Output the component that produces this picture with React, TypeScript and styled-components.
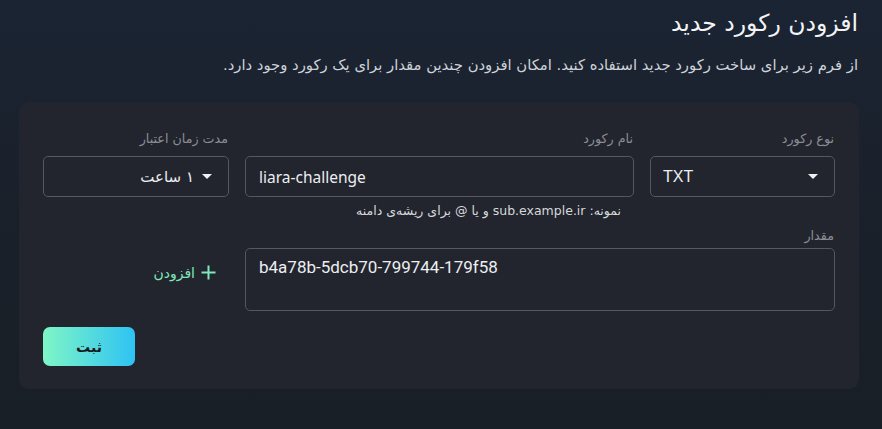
import React from "react";
import styled, { createGlobalStyle } from "styled-components";

const Global = createGlobalStyle`
  html, body { margin: 0; padding: 0; }
  body {
    background: linear-gradient(180deg, #1b2433 0%, #1a2029 60%, #191f26 100%);
    min-height: 429px;
    font-family: "Noto Sans", "DejaVu Sans", sans-serif;
    color: #e8eaed;
  }
  * { box-sizing: border-box; }
`;

const Page = styled.div`
  direction: rtl;
  padding: 6px 23px 40px 19px;
  min-height: 429px;
`;

const Title = styled.h1`
  margin: 0 1px 0 0;
  font-family: "DejaVu Sans", sans-serif;
  font-weight: 400;
  font-size: 23.5px;
  line-height: 34px;
  color: #f3f4f6;
`;

const Desc = styled.p`
  margin: 15px 1px 0 0;
  font-family: "DejaVu Sans", sans-serif;
  font-size: 14.8px;
  line-height: 20px;
  color: #cfd3d9;
`;

const Card = styled.section`
  margin-top: 27px;
  background: #22252d;
  border-radius: 10px;
  padding: 29px 24px 23px 24px;
`;

const Grid = styled.div`
  display: grid;
  grid-template-columns: 185px 1fr 186px;
  column-gap: 16px;
`;

const Field = styled.div<{ $span?: number }>`
  display: flex;
  flex-direction: column;
  grid-column: span ${(p) => p.$span ?? 1};
`;

const Label = styled.label<{ $gap?: number }>`
  font-family: "DejaVu Sans", sans-serif;
  font-size: 12.7px;
  line-height: 16px;
  color: #8b8e95;
  padding-right: 1px;
  margin-bottom: ${(p) => p.$gap ?? 9}px;
`;

const Box = styled.div<{ $tall?: boolean }>`
  height: ${(p) => (p.$tall ? 63 : 41)}px;
  border: 1px solid #55585f;
  border-radius: 5px;
  display: flex;
  align-items: ${(p) => (p.$tall ? "flex-start" : "center")};
  padding: ${(p) => (p.$tall ? "8px 13px" : "0 13px")};
  color: #eceef1;
`;

const LtrText = styled.span<{ $mono?: boolean }>`
  direction: ltr;
  unicode-bidi: isolate;
  margin-right: auto;
  font-family: ${(p) => (p.$mono ? "Roboto, sans-serif" : "\"Noto Sans\", sans-serif")};
  font-size: ${(p) => (p.$mono ? 17 : 15.5)}px;
`;

const SelectBox = styled(Box)`
  padding: 0 16px 0 16px;
  gap: 8px;
`;

const Caret = styled.span`
  width: 0;
  height: 0;
  border-left: 5px solid transparent;
  border-right: 5px solid transparent;
  border-top: 5px solid #f0f0f0;
`;

const TxtValue = styled.span`
  font-family: "Liberation Sans", Arial, sans-serif;
  font-size: 16px;
  direction: ltr;
  margin-right: auto;
  margin-left: -4px;
`;

const SelectText = styled.span`
  font-family: "DejaVu Sans", sans-serif;
  font-size: 15px;
`;

const Hint = styled.div`
  font-family: "DejaVu Sans", sans-serif;
  font-size: 12.5px;
  line-height: 18px;
  color: #d6d8dc;
  margin-top: 5px;
  padding-right: 13px;
`;

const Row2 = styled(Grid)`
  margin-top: 8px;
  align-items: end;
`;

const AddCell = styled.div`
  height: 63px;
  display: flex;
  align-items: center;
  padding-bottom: 14px;
  padding-right: 13px;
`;

const AddButton = styled.button`
  background: none;
  border: 0;
  padding: 0;
  display: flex;
  align-items: center;
  gap: 6px;
  color: #7ee7bb;
  font-family: "DejaVu Sans", sans-serif;
  font-size: 14px;
  cursor: pointer;
`;

const Actions = styled.div`
  display: flex;
  justify-content: flex-end;
  margin-top: 16px;
`;

const Submit = styled.button`
  width: 92px;
  height: 39px;
  border: 0;
  border-radius: 7px;
  background: linear-gradient(90deg, #7ff6c6 0%, #2ec3f3 100%);
  color: #15181d;
  font-family: "DejaVu Sans", sans-serif;
  font-weight: 700;
  font-size: 14px;
  cursor: pointer;
`;

export default function App() {
  return (
    <>
      <Global />
      <Page>
        <Title>افزودن رکورد جدید</Title>
        <Desc>
          از فرم زیر برای ساخت رکورد جدید استفاده کنید. امکان افزودن چندین مقدار
          برای یک رکورد وجود دارد.
        </Desc>
        <Card>
          <Grid>
            <Field>
              <Label>نوع رکورد</Label>
              <SelectBox>
                <Caret />
                <TxtValue>TXT</TxtValue>
              </SelectBox>
            </Field>
            <Field>
              <Label>نام رکورد</Label>
              <Box>
                <LtrText>liara-challenge</LtrText>
              </Box>
              <Hint>
                نمونه: <bdi>sub.example.ir</bdi> و یا @ برای ریشه‌ی دامنه
              </Hint>
            </Field>
            <Field>
              <Label>مدت زمان اعتبار</Label>
              <SelectBox>
                <Caret />
                <SelectText>۱ ساعت</SelectText>
              </SelectBox>
            </Field>
          </Grid>
          <Row2>
            <Field $span={2}>
              <Label $gap={4}>مقدار</Label>
              <Box $tall>
                <LtrText $mono>b4a78b-5dcb70-799744-179f58</LtrText>
              </Box>
            </Field>
            <AddCell>
              <AddButton>
                <svg width="15" height="15" viewBox="0 0 15 15" aria-hidden>
                  <path
                    d="M7.5 0.5v14M0.5 7.5h14"
                    stroke="#7ee7bb"
                    strokeWidth="2"
                    fill="none"
                  />
                </svg>
                افزودن
              </AddButton>
            </AddCell>
          </Row2>
          <Actions>
            <Submit>ثبت</Submit>
          </Actions>
        </Card>
      </Page>
    </>
  );
}
